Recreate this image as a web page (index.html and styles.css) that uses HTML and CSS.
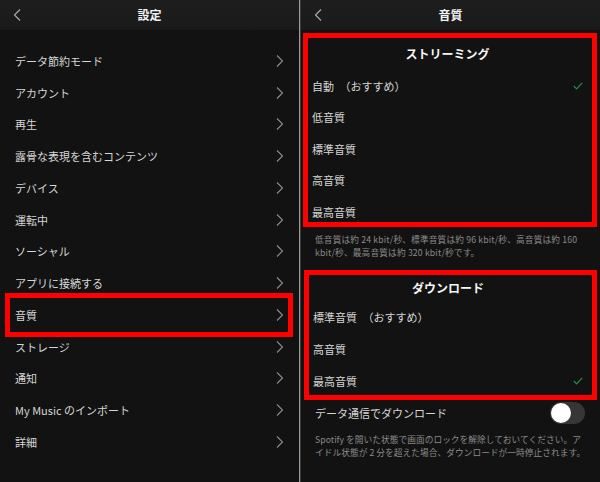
FILE: index.html
```html
<!DOCTYPE html>
<html lang="ja">
<head>
<meta charset="utf-8">
<title>設定 / 音質</title>
<link rel="stylesheet" href="styles.css">
</head>
<body>
<div class="screen">
  <section class="panel">
    <header class="bar">
      <svg class="back" width="8" height="12" viewBox="0 0 8 12"><polyline points="7,0.5 1.5,6 7,11.5" fill="none" stroke="#a8a8a8" stroke-width="1.2"/></svg>
      <h1 class="bar-title">設定</h1>
      <span></span>
    </header>
    <ul class="menu">
      <li class="row">データ節約モード<svg class="chev" width="8" height="12" viewBox="0 0 8 12"><polyline points="1,0.5 6.5,6 1,11.5" fill="none" stroke="#8c8c8c" stroke-width="1.1"/></svg></li>
      <li class="row">アカウント<svg class="chev" width="8" height="12" viewBox="0 0 8 12"><polyline points="1,0.5 6.5,6 1,11.5" fill="none" stroke="#8c8c8c" stroke-width="1.1"/></svg></li>
      <li class="row">再生<svg class="chev" width="8" height="12" viewBox="0 0 8 12"><polyline points="1,0.5 6.5,6 1,11.5" fill="none" stroke="#8c8c8c" stroke-width="1.1"/></svg></li>
      <li class="row">露骨な表現を含むコンテンツ<svg class="chev" width="8" height="12" viewBox="0 0 8 12"><polyline points="1,0.5 6.5,6 1,11.5" fill="none" stroke="#8c8c8c" stroke-width="1.1"/></svg></li>
      <li class="row">デバイス<svg class="chev" width="8" height="12" viewBox="0 0 8 12"><polyline points="1,0.5 6.5,6 1,11.5" fill="none" stroke="#8c8c8c" stroke-width="1.1"/></svg></li>
      <li class="row">運転中<svg class="chev" width="8" height="12" viewBox="0 0 8 12"><polyline points="1,0.5 6.5,6 1,11.5" fill="none" stroke="#8c8c8c" stroke-width="1.1"/></svg></li>
      <li class="row">ソーシャル<svg class="chev" width="8" height="12" viewBox="0 0 8 12"><polyline points="1,0.5 6.5,6 1,11.5" fill="none" stroke="#8c8c8c" stroke-width="1.1"/></svg></li>
      <li class="row">アプリに接続する<svg class="chev" width="8" height="12" viewBox="0 0 8 12"><polyline points="1,0.5 6.5,6 1,11.5" fill="none" stroke="#8c8c8c" stroke-width="1.1"/></svg></li>
      <li class="row marked">音質<svg class="chev" width="8" height="12" viewBox="0 0 8 12"><polyline points="1,0.5 6.5,6 1,11.5" fill="none" stroke="#8c8c8c" stroke-width="1.1"/></svg><span class="highlight"></span></li>
      <li class="row">ストレージ<svg class="chev" width="8" height="12" viewBox="0 0 8 12"><polyline points="1,0.5 6.5,6 1,11.5" fill="none" stroke="#8c8c8c" stroke-width="1.1"/></svg></li>
      <li class="row">通知<svg class="chev" width="8" height="12" viewBox="0 0 8 12"><polyline points="1,0.5 6.5,6 1,11.5" fill="none" stroke="#8c8c8c" stroke-width="1.1"/></svg></li>
      <li class="row">My Music のインポート<svg class="chev" width="8" height="12" viewBox="0 0 8 12"><polyline points="1,0.5 6.5,6 1,11.5" fill="none" stroke="#8c8c8c" stroke-width="1.1"/></svg></li>
      <li class="row">詳細<svg class="chev" width="8" height="12" viewBox="0 0 8 12"><polyline points="1,0.5 6.5,6 1,11.5" fill="none" stroke="#8c8c8c" stroke-width="1.1"/></svg></li>
    </ul>
  </section>
  <div class="divider"></div>
  <section class="panel">
    <header class="bar">
      <svg class="back" width="8" height="12" viewBox="0 0 8 12"><polyline points="7,0.5 1.5,6 7,11.5" fill="none" stroke="#a8a8a8" stroke-width="1.2"/></svg>
      <h1 class="bar-title">音質</h1>
      <span></span>
    </header>
    <div class="box stream">
      <h2 class="box-title">ストリーミング</h2>
      <div class="opt">自動　（おすすめ）<svg class="check" width="10" height="8" viewBox="0 0 10 8"><polyline points="0.8,4 3.6,6.8 9.2,0.8" fill="none" stroke="#1f8f4a" stroke-width="1.2"/></svg></div>
      <div class="opt">低音質</div>
      <div class="opt">標準音質</div>
      <div class="opt">高音質</div>
      <div class="opt">最高音質</div>
    </div>
    <p class="note first">低音質は約 24 kbit/秒、標準音質は約 96 kbit/秒、高音質は約 160<br>kbit/秒、最高音質は約 320 kbit/秒です。</p>
    <div class="box download">
      <h2 class="box-title dl">ダウンロード</h2>
      <div class="opt">標準音質　（おすすめ）</div>
      <div class="opt">高音質</div>
      <div class="opt">最高音質<svg class="check" width="10" height="8" viewBox="0 0 10 8"><polyline points="0.8,4 3.6,6.8 9.2,0.8" fill="none" stroke="#1f8f4a" stroke-width="1.2"/></svg></div>
    </div>
    <div class="toggle-row">
      <span>データ通信でダウンロード</span>
      <span class="switch"><span class="knob"></span></span>
    </div>
    <p class="note last">Spotify を開いた状態で画面のロックを解除しておいてください。ア<br>イドル状態が 2 分を超えた場合、ダウンロードが一時停止されます。</p>
  </section>
</div>
</body>
</html>
```

FILE: styles.css
```css
* { box-sizing: border-box; }
html, body { margin: 0; padding: 0; background: #121212; }
body {
  font-family: "Noto Sans CJK JP", "Noto Sans", sans-serif;
  color: #d8d8d8;
}
.screen {
  display: flex;
  width: 600px;
  height: 482px;
  overflow: hidden;
}
.panel {
  width: 299px;
  flex: none;
  background: #121212;
  height: 482px;
  overflow: hidden;
}
.divider {
  width: 2px;
  flex: none;
  background: linear-gradient(to right, #9a9a9a 0 1px, #3a3a3a 1px 2px);
}
.bar {
  height: 30px;
  display: grid;
  grid-template-columns: 30px 1fr 30px;
  align-items: center;
  background: linear-gradient(#1e1e1e, #1a1a1a);
}
.back { margin-left: 13px; display: block; }
.bar-title {
  margin: 0;
  text-align: center;
  font-size: 12px;
  font-weight: 700;
  color: #f2f2f2;
  line-height: 30px;
}
.menu {
  list-style: none;
  margin: 0;
  padding: 15px 0 0;
}
.row {
  position: relative;
  height: 31.75px;
  display: flex;
  align-items: center;
  justify-content: space-between;
  padding: 0 15px;
  font-size: 11px;
  color: #d6d6d6;
}
.chev { display: block; }
.highlight {
  position: absolute;
  top: -6px;
  bottom: -6px;
  left: 5px;
  right: 6px;
  border: 5px solid #ff0000;
}
.box {
  border: 5px solid #ff0000;
  margin: 3px 3px 0 2px;
  padding: 0 9px 0 4px;
}
.stream { height: 194px; }
.download { height: 130px; margin-left: 3px; margin-top: 11px; }
.box-title {
  margin: 0;
  height: 32px;
  line-height: 32px;
  text-align: center;
  font-size: 12px;
  font-weight: 700;
  color: #f5f5f5;
}
.box-title.dl { height: 26px; line-height: 26px; }
.opt {
  height: 31.5px;
  display: flex;
  align-items: center;
  justify-content: space-between;
  font-size: 11px;
  color: #d6d6d6;
}
.download .opt { height: 32px; }
.check { display: block; }
.note {
  margin: 0;
  padding: 0 14px;
  font-size: 8.7px;
  line-height: 12.5px;
  color: #8a8a8a;
  white-space: nowrap;
}
.note.first { margin-top: 7px; letter-spacing: 0.15px; }
.note.last { margin-top: 8px; letter-spacing: 0.05px; }
.toggle-row {
  height: 26px;
  display: flex;
  align-items: center;
  justify-content: space-between;
  padding: 0 15px 0 14px;
  font-size: 11px;
  color: #d6d6d6;
}
.switch {
  width: 35px;
  height: 22px;
  border-radius: 11px;
  background: #363636;
  display: flex;
  align-items: center;
  padding: 0 1px;
}
.knob {
  width: 20px;
  height: 20px;
  border-radius: 50%;
  background: #ffffff;
}
```
